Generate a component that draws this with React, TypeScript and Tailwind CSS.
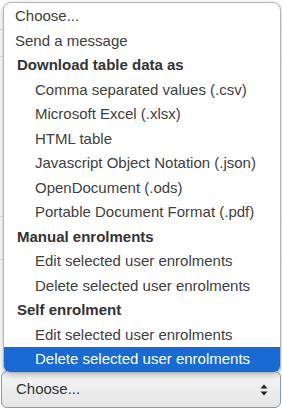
import React from "react";

type Row = { label: string; kind: "opt" | "group" | "sub"; selected?: boolean };

const rows: Row[] = [
  { label: "Choose...", kind: "opt" },
  { label: "Send a message", kind: "opt" },
  { label: "Download table data as", kind: "group" },
  { label: "Comma separated values (.csv)", kind: "sub" },
  { label: "Microsoft Excel (.xlsx)", kind: "sub" },
  { label: "HTML table", kind: "sub" },
  { label: "Javascript Object Notation (.json)", kind: "sub" },
  { label: "OpenDocument (.ods)", kind: "sub" },
  { label: "Portable Document Format (.pdf)", kind: "sub" },
  { label: "Manual enrolments", kind: "group" },
  { label: "Edit selected user enrolments", kind: "sub" },
  { label: "Delete selected user enrolments", kind: "sub" },
  { label: "Self enrolment", kind: "group" },
  { label: "Edit selected user enrolments", kind: "sub" },
  { label: "Delete selected user enrolments", kind: "sub", selected: true },
];

function Option({ row }: { row: Row }) {
  const pad =
    row.kind === "opt" ? "pl-[11px]" : row.kind === "group" ? "pl-[13px]" : "pl-[31px]";
  const weight = row.kind === "group" ? "font-bold text-[#333333]" : "text-[#404040]";
  return (
    <div
      className={`h-[24.5px] flex items-center whitespace-nowrap ${pad} ${
        row.selected ? "bg-[#1a6ad4] text-white rounded-b-[6px]" : weight
      }`}
    >
      {row.label}
    </div>
  );
}

export default function App() {
  return (
    <div
      className="relative w-[282px] h-[410px] bg-white overflow-hidden flex flex-col"
      style={{ fontFamily: '"Liberation Sans", Arial, sans-serif' }}
    >
      {/* page behind the popup: table rows */}
      <div className="flex-1 flex flex-col">
        <div className="h-[30px] border-b border-[#dee2e6]" />
        <div className="h-[27px] border-b border-[#dee2e6]" />
        <div className="h-[160px] border-b border-[#dee2e6]" />
        <div className="h-[43px] border-b border-[#dee2e6]" />
        <div className="flex-1" />
      </div>

      {/* the select itself */}
      <div className="mx-[1px] mb-[2px] h-[37px] rounded-[6px] border border-[#7d9cc0] bg-gradient-to-b from-[#f7f7f7] to-[#e4e4e4] flex items-center justify-between pl-[14px] pr-[12px] text-[15px] text-[#333333]">
        <span>Choose...</span>
        <svg width="8" height="12" viewBox="0 0 8 12" fill="#222">
          <path d="M4 0.5 L7.5 4.5 H0.5 Z" />
          <path d="M4 11.5 L7.5 7.5 H0.5 Z" />
        </svg>
      </div>

      {/* open dropdown list */}
      <div className="absolute left-[3px] top-[2px] w-[278px] bg-white border border-[#b4b4b4] rounded-t-[8px] rounded-b-[7px] shadow-[0_2px_6px_rgba(0,0,0,0.25)] pt-[1px] text-[15px]">
        {rows.map((r, i) => (
          <Option key={i} row={r} />
        ))}
      </div>
    </div>
  );
}
